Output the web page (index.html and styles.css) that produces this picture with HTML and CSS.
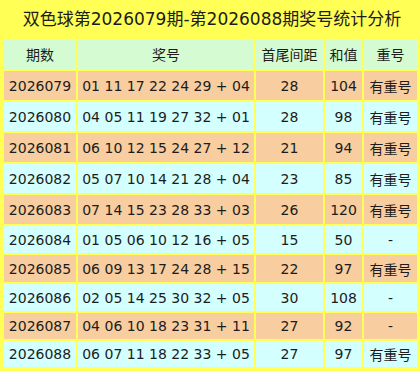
FILE: index.html
```html
<!DOCTYPE html>
<html lang="zh">
<head>
<meta charset="utf-8">
<link rel="stylesheet" href="styles.css">
</head>
<body>
<div class="board">
  <div class="title">双色球第2026079期-第2026088期奖号统计分析</div>
  <table class="stats">
    <colgroup>
      <col class="c-issue"><col class="c-nums"><col class="c-span"><col class="c-sum"><col class="c-rep">
    </colgroup>
    <thead>
      <tr class="head"><th>期数</th><th>奖号</th><th>首尾间距</th><th>和值</th><th>重号</th></tr>
    </thead>
    <tbody>
      <tr class="odd tall"><td>2026079</td><td>01 11 17 22 24 29 + 04</td><td>28</td><td>104</td><td>有重号</td></tr>
      <tr class="even tall"><td>2026080</td><td>04 05 11 19 27 32 + 01</td><td>28</td><td>98</td><td>有重号</td></tr>
      <tr class="odd tall"><td>2026081</td><td>06 10 12 15 24 27 + 12</td><td>21</td><td>94</td><td>有重号</td></tr>
      <tr class="even tall"><td>2026082</td><td>05 07 10 14 21 28 + 04</td><td>23</td><td>85</td><td>有重号</td></tr>
      <tr class="odd tall"><td>2026083</td><td>07 14 15 23 28 33 + 03</td><td>26</td><td>120</td><td>有重号</td></tr>
      <tr class="even mid"><td>2026084</td><td>01 05 06 10 12 16 + 05</td><td>15</td><td>50</td><td>-</td></tr>
      <tr class="odd mid"><td>2026085</td><td>06 09 13 17 24 28 + 15</td><td>22</td><td>97</td><td>有重号</td></tr>
      <tr class="even mid"><td>2026086</td><td>02 05 14 25 30 32 + 05</td><td>30</td><td>108</td><td>-</td></tr>
      <tr class="odd short"><td>2026087</td><td>04 06 10 18 23 31 + 11</td><td>27</td><td>92</td><td>-</td></tr>
      <tr class="even short"><td>2026088</td><td>06 07 11 18 22 33 + 05</td><td>27</td><td>97</td><td>有重号</td></tr>
    </tbody>
  </table>
</div>
</body>
</html>
```
FILE: styles.css
```css
html, body {
  margin: 0;
  padding: 0;
  background: #ffffff;
}
.board {
  width: 420px;
  height: 371px;
  box-sizing: border-box;
  background: #ffff55;
  padding: 0 1px 2px 2px;
  font-family: "DejaVu Sans", "Noto Sans CJK SC", sans-serif;
  color: #1c1c1c;
}
.title {
  height: 37px;
  line-height: 38px;
  font-size: 17px;
  text-align: center;
  padding-left: 3px;
}
.stats {
  border-collapse: separate;
  border-spacing: 2px;
  table-layout: fixed;
  width: 417px;
  font-size: 14px;
}
.c-issue { width: 72px; }
.c-nums { width: 176px; }
.c-span { width: 67px; }
.c-sum { width: 37px; }
.c-rep { width: 53px; }
.stats th,
.stats td {
  padding: 0;
  text-align: center;
  white-space: nowrap;
  font-weight: normal;
}
.head th {
  height: 30px;
  background: #d5fbd3;
}
.tall td { height: 29px; }
.mid td { height: 27px; }
.short td { height: 26px; }
.odd td { background: #f8cd9f; }
.even td { background: #d4ffff; }
```
